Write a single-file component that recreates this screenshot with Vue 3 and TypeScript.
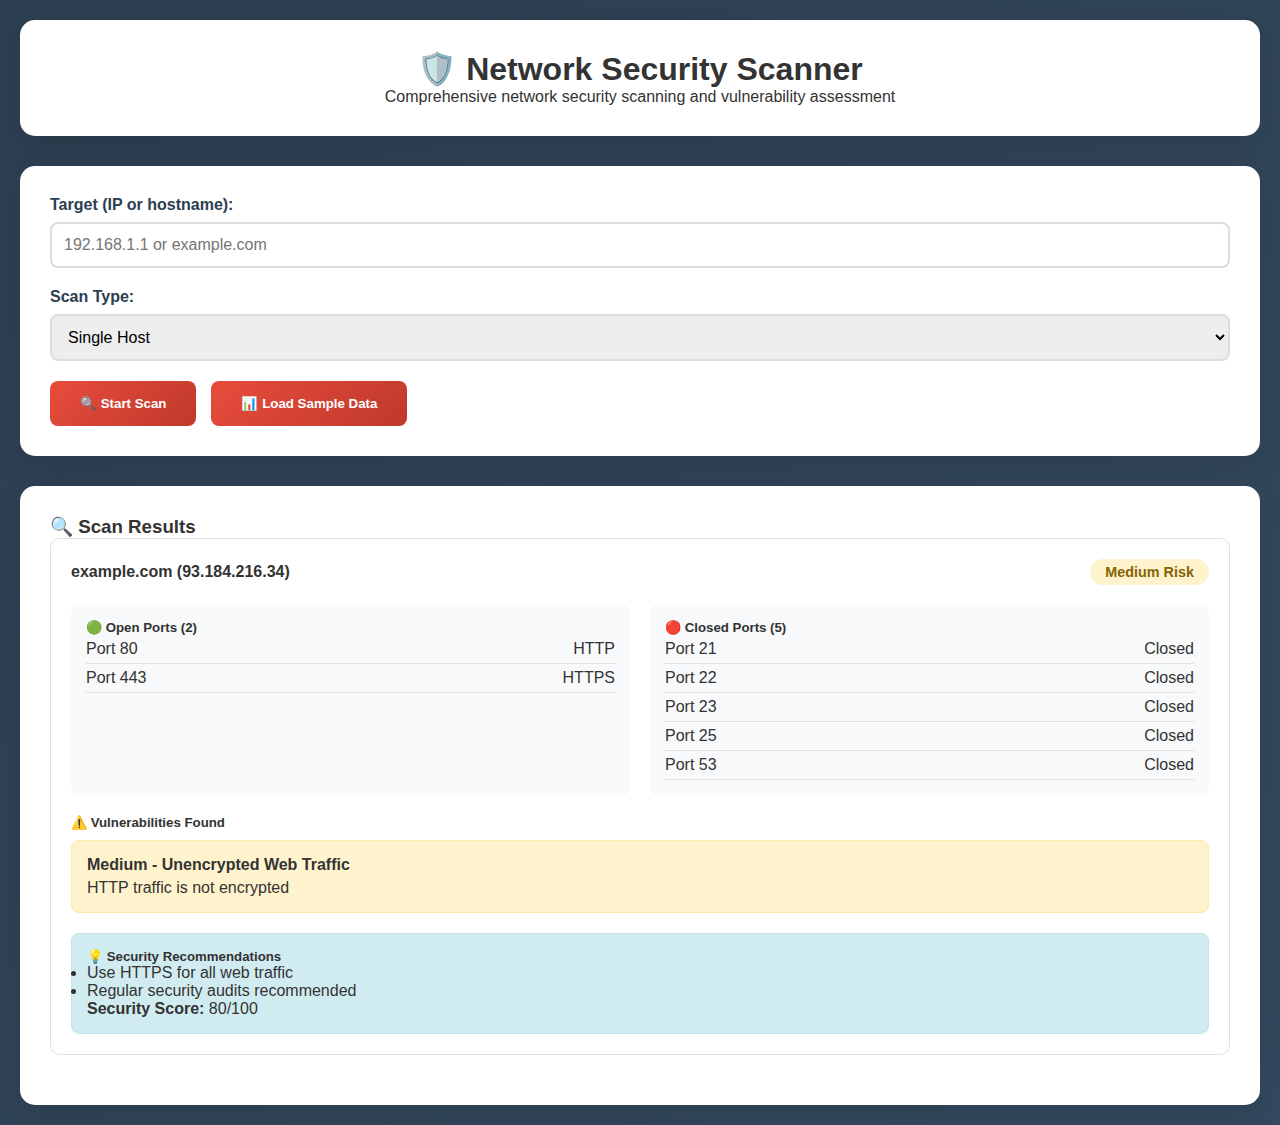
<script setup lang="ts">
const openPorts = [
  { port: 80, label: "HTTP" },
  { port: 443, label: "HTTPS" },
];
const closedPorts = [21, 22, 23, 25, 53];
const recommendations = ["Use HTTPS for all web traffic", "Regular security audits recommended"];
</script>

<template>
  <div class="page">
    <header class="card head">
      <h1>🛡️ Network Security Scanner</h1>
      <p>Comprehensive network security scanning and vulnerability assessment</p>
    </header>

    <section class="card">
      <div class="field">
        <label for="target">Target (IP or hostname):</label>
        <input id="target" type="text" placeholder="192.168.1.1 or example.com" />
      </div>
      <div class="field">
        <label for="scan-type">Scan Type:</label>
        <select id="scan-type">
          <option>Single Host</option>
        </select>
      </div>
      <div class="actions">
        <button type="button">🔍 Start Scan</button>
        <button type="button">📊 Load Sample Data</button>
      </div>
    </section>

    <section class="card results">
      <h3>🔍 Scan Results</h3>
      <div class="host">
        <div class="host-head">
          <strong>example.com (93.184.216.34)</strong>
          <span class="risk">Medium Risk</span>
        </div>
        <div class="ports">
          <div class="port-box">
            <h5>🟢 Open Ports (2)</h5>
            <div v-for="p in openPorts" :key="p.port" class="port-row">
              <span>Port {{ p.port }}</span>
              <span>{{ p.label }}</span>
            </div>
          </div>
          <div class="port-box">
            <h5>🔴 Closed Ports (5)</h5>
            <div v-for="p in closedPorts" :key="p" class="port-row">
              <span>Port {{ p }}</span>
              <span>Closed</span>
            </div>
          </div>
        </div>
        <h5 class="vuln-title">⚠️ Vulnerabilities Found</h5>
        <div class="vuln">
          <strong>Medium - Unencrypted Web Traffic</strong>
          <div>HTTP traffic is not encrypted</div>
        </div>
        <div class="recs">
          <h5>💡 Security Recommendations</h5>
          <ul>
            <li v-for="r in recommendations" :key="r">{{ r }}</li>
          </ul>
          <div><strong>Security Score:</strong> 80/100</div>
        </div>
      </div>
    </section>
  </div>
</template>

<style>
body {
  min-height: 100vh;
  background: linear-gradient(135deg, #2c3e50, #34495e);
}
</style>

<style scoped>
.page {
  padding: 20px;
  font-family: "Liberation Sans", Arial, sans-serif;
  font-size: 16px;
  color: #333;
}
.card {
  background: #fff;
  border-radius: 15px;
  padding: 30px;
  margin-bottom: 30px;
  box-shadow: 0 10px 30px rgba(0, 0, 0, 0.1);
}
.card:last-child {
  margin-bottom: 0;
}
.head {
  text-align: center;
}
h1 {
  margin: 0;
  font-size: 32px;
}
.head p {
  margin: 0;
}
.field {
  margin-bottom: 20px;
}
label {
  display: block;
  margin-bottom: 8px;
  font-weight: 700;
  color: #2c3e50;
}
input,
select {
  display: block;
  width: 100%;
  box-sizing: border-box;
  padding: 12px;
  border: 2px solid #ddd;
  border-radius: 8px;
  font-family: inherit;
  font-size: 16px;
}
input::placeholder {
  color: #757575;
}
select {
  background-color: #eee;
  color: #000;
}
.actions {
  display: flex;
  gap: 15px;
}
button {
  padding: 15px 30px;
  border: 0;
  border-radius: 8px;
  background: linear-gradient(135deg, #e74c3c, #c0392b);
  color: #fff;
  font-family: inherit;
  font-size: 13.3px;
  font-weight: 700;
}
h3 {
  margin: 0;
  font-size: 18.72px;
}
.host {
  margin-bottom: 20px;
  padding: 20px;
  border: 1px solid #e0e0e0;
  border-radius: 10px;
}
.host-head {
  display: flex;
  justify-content: space-between;
  align-items: center;
  margin-bottom: 20px;
}
.risk {
  padding: 5px 15px;
  border-radius: 20px;
  background: #fff3cd;
  color: #856404;
  font-size: 14.4px;
  font-weight: 700;
}
.ports {
  display: grid;
  grid-template-columns: 1fr 1fr;
  gap: 20px;
  margin-bottom: 20px;
}
.port-box {
  padding: 15px;
  border-radius: 8px;
  background: #f8f9fa;
}
h5 {
  margin: 0;
  font-size: 13.25px;
}
.port-row {
  display: flex;
  justify-content: space-between;
  padding: 5px 0;
  border-bottom: 1px solid #e0e0e0;
}
.vuln-title {
  margin-bottom: 10px;
}
.vuln {
  padding: 15px;
  border: 1px solid #ffeaa7;
  border-radius: 8px;
  background: #fff3cd;
}
.vuln strong {
  display: block;
  margin-bottom: 5px;
}
.recs {
  margin-top: 20px;
  padding: 15px;
  border: 1px solid #bee5eb;
  border-radius: 8px;
  background: #d1ecf1;
}
.recs ul {
  margin: 0;
  padding: 0;
}
</style>
